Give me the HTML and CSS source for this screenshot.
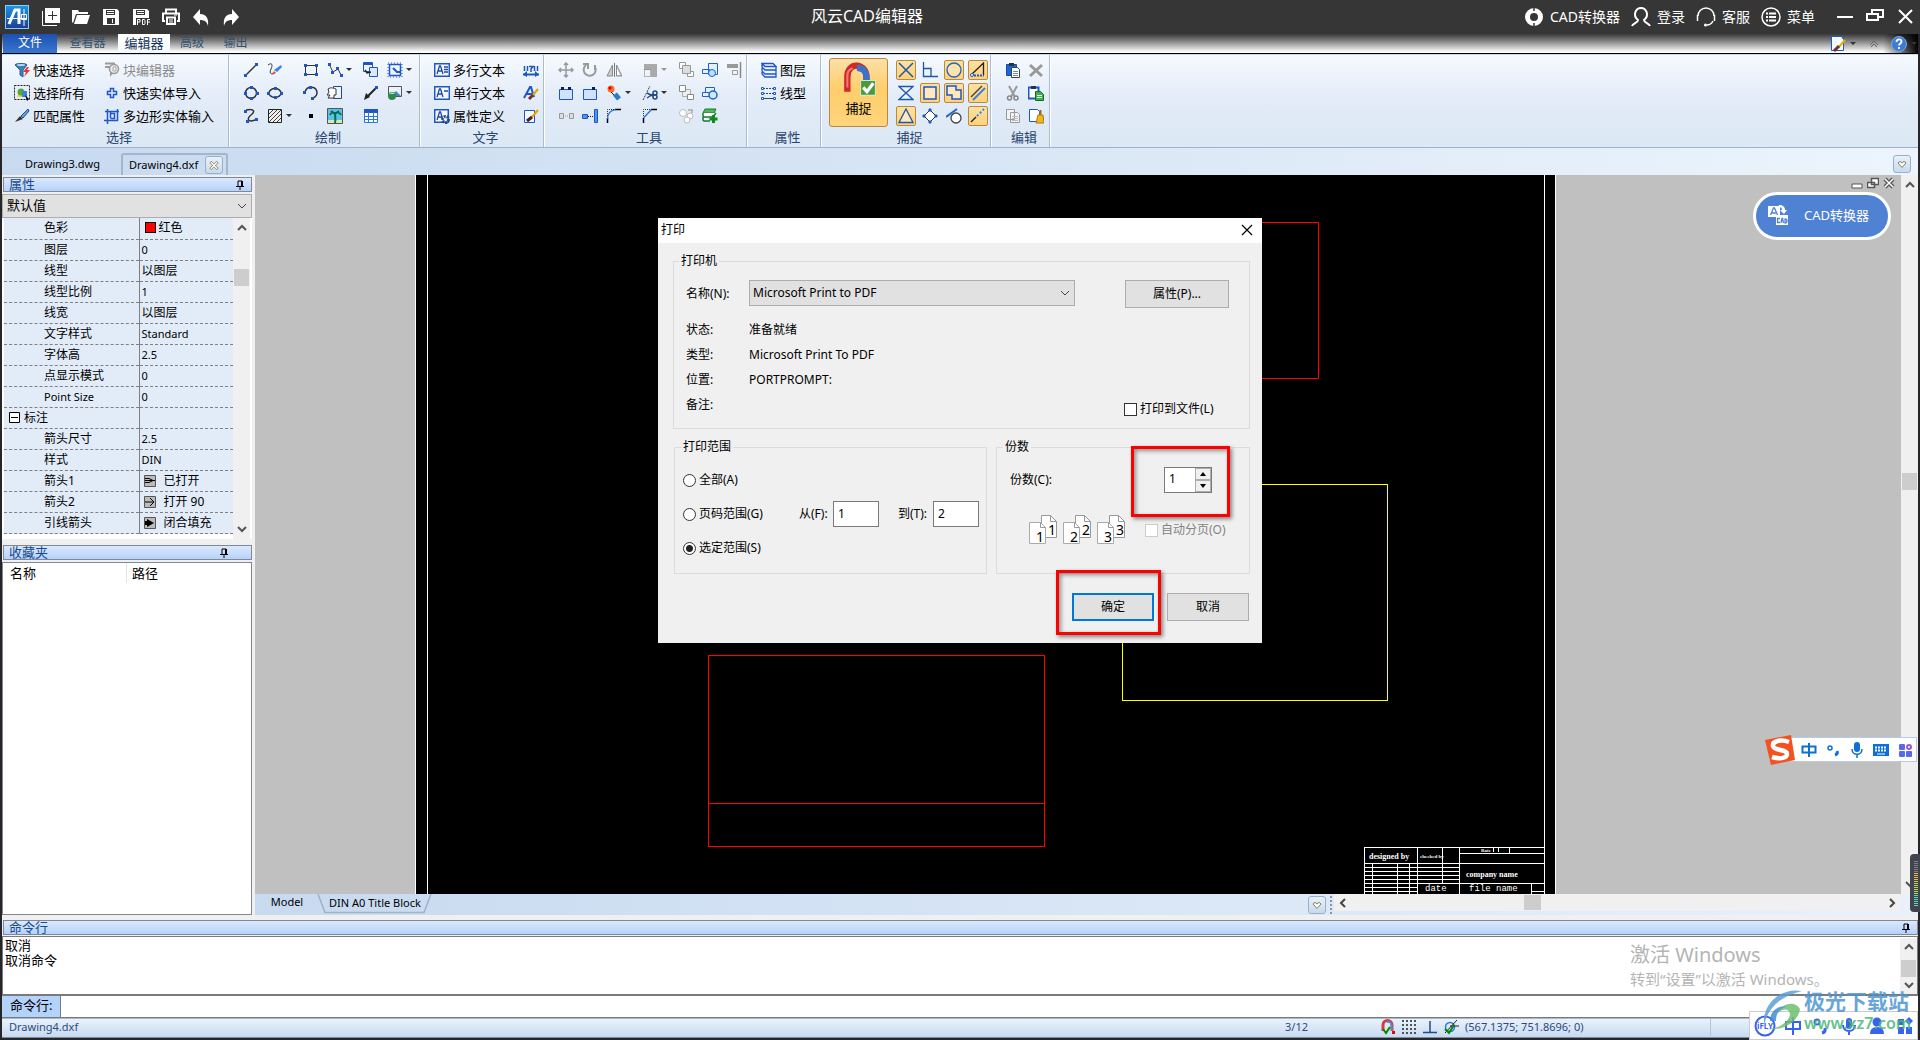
FILE: index.html
```html
<!DOCTYPE html>
<html lang="zh-CN">
<head>
<meta charset="utf-8">
<title>风云CAD编辑器</title>
<link rel="stylesheet" href="styles.css">
</head>
<body>
<svg class="defs" aria-hidden="true">
  <symbol id="up" viewBox="0 0 10 10"><path d="M1 7 5 3l4 4" fill="none" stroke="#555" stroke-width="2"/></symbol>
  <symbol id="down" viewBox="0 0 10 10"><path d="M1 3l4 4 4-4" fill="none" stroke="#555" stroke-width="2"/></symbol>
  <symbol id="left" viewBox="0 0 10 10"><path d="M7 1 3 5l4 4" fill="none" stroke="#444" stroke-width="2"/></symbol>
  <symbol id="right" viewBox="0 0 10 10"><path d="M3 1l4 4-4 4" fill="none" stroke="#444" stroke-width="2"/></symbol>
  <symbol id="pin" viewBox="0 0 8 10"><path d="M2 1v5M2 1h4M5.500 1v5M6.500 1v5M0 6.500h8M4 7v3" fill="none" stroke="#000" stroke-width="1"/></symbol>
  <symbol id="tri" viewBox="0 0 6 4"><path d="M0 0h6L3 3z" fill="currentColor"/></symbol>
  <symbol id="heart" viewBox="0 0 10 8"><path d="M1 2.500 3 .8l2 1.700L7 .8l2 1.700L5 7z" fill="#fff" stroke="#8a7c50"/></symbol>
  <symbol id="pages" viewBox="0 0 30 30"><path d="M12.500.5h9l6 6v16h-15z" fill="#fff" stroke="#999"/><path d="M21.500.5v6h6" fill="none" stroke="#999"/><path d="M.5 7.500h11l5 5v16h-16z" fill="#fff" stroke="#aaa"/><path d="M11.500 7.500v5h5" fill="none" stroke="#999"/></symbol>
</svg>

<header class="titlebar">
  <div class="quick">
    <svg class="logo" viewBox="0 0 24 24"><defs><linearGradient id="lg" x1="0" y1="0" x2="0" y2="1"><stop offset="0" stop-color="#1d96e4"/><stop offset="1" stop-color="#1d3c94"/></linearGradient></defs><rect x=".5" y=".5" width="23" height="23" fill="url(#lg)" stroke="#7fd0ff"/><path d="M4 19 10 5h4v14" fill="none" stroke="#fff" stroke-width="3"/><path d="M2 13.500h20M19 4v17" fill="none" stroke="#fff"/><path d="M16.500 9.500h5v5h-5z" fill="none" stroke="#fff"/></svg>
    <button aria-label="新建"><svg viewBox="0 0 18 18"><path d="M3 0h15v15H3z" fill="#fff"/><path d="M.5 3v14.500H15" fill="none" stroke="#fff"/><path d="M10.500 3v9M6 7.500h9" stroke="#333"/></svg></button>
    <button aria-label="打开"><svg viewBox="0 0 18 18"><path d="M0 14V2h6l1 2h9v2H4L1 15zM5 7h13l-3 9H2z" fill="#fff"/></svg></button>
    <button aria-label="保存"><svg viewBox="0 0 18 18"><path d="M1 1h14l2 2v14H1z" fill="#fff"/><path d="M4 2h9v5H4zM5 10h8v6H5z" fill="#363636"/><path d="M5 3.500h7M5 5.500h7M10.500 11v4" stroke="#fff"/></svg></button>
    <button aria-label="保存为PDF"><svg viewBox="0 0 18 18"><path d="M1 1h14l2 2v14H1z" fill="#fff"/><path d="M4 2h9v5H4zM4 10h14v7H4z" fill="#363636"/><path d="M5 3.500h7M5 5.500h7" stroke="#fff"/><path d="M5.500 17v-5.500h2.500v2.500H5.500M10.500 11.500h2l.5 1v3l-.5 1h-2zM15.500 17v-5.500H18M15.500 14H18" fill="none" stroke="#fff"/></svg></button>
    <button aria-label="打印"><svg viewBox="0 0 18 18"><path d="M4 5V1.500h10V5M3 13H1V5.500h16V13h-2" fill="none" stroke="#fff" stroke-width="2"/><path d="M5 9.500h8v6.500H5z" fill="none" stroke="#fff" stroke-width="2"/><path d="M7 12h4M7 14h4M12 7h3" stroke="#fff"/></svg></button>
    <button aria-label="撤销"><svg viewBox="0 0 18 18"><path d="M8 1v5c6 0 9 4 8 12-1-4-3-6-8-6v5L1 9z" fill="#fff"/></svg></button>
    <button aria-label="重做"><svg viewBox="0 0 18 18"><path d="M10 1v5C4 6 1 10 2 18c1-4 3-6 8-6v5l7-8z" fill="#fff"/></svg></button>
  </div>
  <h1>风云CAD编辑器</h1>
  <div class="title-end">
  <nav class="account">
    <button><svg viewBox="0 0 20 20"><circle cx="10" cy="10" r="6.500" fill="none" stroke="#fff" stroke-width="5"/><path d="M10 0v4M10 16v4" stroke="#363636" stroke-width="1.500"/></svg>CAD转换器</button>
    <button><svg viewBox="0 0 20 20"><path d="M1 19c1-3 6-3 6-6-6-5-2-12 3-12s9 7 3 12c0 3 5 3 6 6" fill="none" stroke="#fff" stroke-width="2"/></svg>登录</button>
    <button><svg viewBox="0 0 20 20"><path d="M2 9a8 8 0 0 1 16 0M1.500 8v6M18.500 8v6M17 14q-2 4-6 4" fill="none" stroke="#fff" stroke-width="1.500"/><circle cx="9.500" cy="18" r="1.500" fill="#fff"/></svg>客服</button>
    <button><svg viewBox="0 0 20 20"><circle cx="10" cy="10" r="9" fill="none" stroke="#fff" stroke-width="1.500"/><path d="M5 6.500h2m1 0h7M5 10h2m1 0h7M5 13.500h2m1 0h7" stroke="#fff" stroke-width="2"/></svg>菜单</button>
  </nav>
  <div class="winbtns">
    <button aria-label="最小化"><svg viewBox="0 0 18 18"><path d="M1 9h16" stroke="#fff" stroke-width="2"/></svg></button>
    <button aria-label="还原"><svg viewBox="0 0 18 18"><path d="M6 6V2h11v7h-5M1 6h11v6H1z" fill="none" stroke="#fff" stroke-width="2"/></svg></button>
    <button aria-label="关闭"><svg viewBox="0 0 18 18"><path d="M3 2l13 13M16 2 3 15" stroke="#fff" stroke-width="2"/></svg></button>
  </div>
  </div>
</header>

<div class="app">
<nav class="tabs">
  <button class="file">文件</button><button>查看器</button><button class="on">编辑器</button><button>高级</button><button>输出</button>
  <div class="tabs-end">
    <svg class="i" viewBox="0 0 16 16"><path d="M1.500.5h10l2 3v11h-12z" fill="#f4f9ff" stroke="#1e56c8"/><path d="M15 4 8 12" stroke="#e8b200" stroke-width="2"/><path d="M9 10 4 15" stroke="#703030" stroke-width="3"/></svg>
    <svg class="tr" viewBox="0 0 6 4"><use href="#tri"/></svg>
    <svg class="chev" viewBox="0 0 10 8"><path d="M1 5l4-4 4 4M2 7l3-3 3 3" fill="none" stroke="#666"/></svg>
    <svg class="i" viewBox="0 0 16 16"><circle cx="8" cy="8" r="7.500" fill="#3f7bd0" stroke="#7aa8e8"/><path d="M5.500 6c0-3.500 5-3.500 5-.5 0 2-2.500 2-2.500 4M8 11v2" fill="none" stroke="#fff" stroke-width="1.800"/></svg>
    <svg class="tr" viewBox="0 0 6 4"><use href="#tri"/></svg>
  </div>
</nav>

<section class="ribbon">
  <div class="group g-select">
    <div class="cols">
      <button><svg class="i" viewBox="0 0 16 16"><path d="M1 3c0-2 12-2 12 0L9 8v7l-3-2V8z" fill="#3a84b8" stroke="#2a5f96"/><ellipse cx="7" cy="3" rx="4" ry="1" fill="#b9def2"/><path d="m13 5-4 5h3l-2 5 6-7h-3l2-3z" fill="#f03028"/></svg>快速选择</button>
      <button class="off"><svg class="i" viewBox="0 0 16 16"><path d="M1 1.500h10M1 5h6" fill="none" stroke="#999" stroke-width="2"/><path d="M6 3v12l3-4" fill="#999"/><circle cx="10" cy="7" r="4.500" fill="#eee" stroke="#999" stroke-width="1.500"/><path d="M9 5h3v4H9z" fill="none" stroke="#aaa"/></svg>块编辑器</button>
      <button><svg class="i" viewBox="0 0 16 16"><path d="M.5.5h15v14H.5z" fill="none" stroke="#222" stroke-dasharray="2 1"/><path d="M3 12 6 4l4 8z" fill="#e9d234"/><circle cx="7" cy="7" r="3.500" fill="#57a83a"/><path d="M8 6h5v6H8z" fill="#3a84d8"/><path d="m11 10 4 4-2 2z" fill="#000"/></svg>选择所有</button>
      <button><svg class="i" viewBox="0 0 16 16"><path d="M6.500 3.500h3v3h3v3h-3v3h-3v-3h-3v-3h3z" fill="#e6f0ff" stroke="#1e56c8" stroke-width="1.500"/></svg>快速实体导入</button>
      <button><svg class="i" viewBox="0 0 16 16"><path d="m14 1 1 2-6 7-2-2z" fill="#5fa5e4" stroke="#234a86"/><path d="m1 14 5-6 3 3z" fill="#333"/></svg>匹配属性</button>
      <button><svg class="i" viewBox="0 0 16 16"><path d="M3.500 1v15M6.500 4v6M13.500 1v12M1 3.500h14M0 12.500h14M6.500 5.500h4v5h-4" fill="none" stroke="#1e56c8" stroke-width="1.500"/></svg>多边形实体输入</button>
    </div>
    <h2>选择</h2>
  </div>

  <div class="group g-draw">
    <div class="cols">
      <button aria-label="直线"><svg class="i" viewBox="0 0 16 16"><path d="M3 13 13 3" stroke="#333" stroke-width="1.500"/><path d="M1 12h3v3H1zM12 1h3v3h-3z" fill="#1e56c8"/></svg></button>
      <button aria-label="草图"><svg class="i" viewBox="0 0 16 16"><path d="M1 3c4-3 5 0 3 4s0 6 2 4" fill="none" stroke="#333"/><path d="m14 3 1 2-5 5-3-2z" fill="#3a84e8"/><path d="m7 9 2 2-4 2z" fill="#f33"/></svg></button>
      <button aria-label="矩形"><svg class="i" viewBox="0 0 16 16"><path d="M2.500 3.500h11v9h-11z" fill="none" stroke="#333"/><path d="M1 2h3v3H1zM12 2h3v3h-3zM1 11h3v3H1zM12 11h3v3h-3z" fill="#1e56c8"/></svg></button>
      <button aria-label="多段线"><svg class="i" viewBox="0 0 16 16"><path d="m2 2 4 8 5-3 3 6" fill="none" stroke="#333"/><path d="M1 1h3v3H1zM4 9h3v3H4zM9 5h3v3H9zM13 12h3v3h-3z" fill="#1e56c8"/></svg><svg class="tr" viewBox="0 0 6 4"><use href="#tri"/></svg></button>
      <button aria-label="插入块"><svg class="i" viewBox="0 0 16 16"><path d="M.5.5h9v9h-9z" fill="#eef4ff" stroke="#1e56c8"/><path d="M1 2h9" stroke="#1e56c8" stroke-width="2"/><path d="M6.500 5.500h8v9h-8z" fill="#dbe8ff" stroke="#1e56c8"/><path d="m2 8 2 3 4-1" fill="none" stroke="#222" stroke-width="1.500"/></svg></button>
      <button aria-label="块"><svg class="i" viewBox="0 0 16 16"><path d="M2.500 2.500h11v11h-11z" fill="none" stroke="#1e56c8" stroke-width="1.500"/><path d="M1 1h14v14H1z" fill="none" stroke="#1e56c8" stroke-dasharray="1 2"/><path d="m6 6 4 4h4" stroke="#1e56c8" fill="none" stroke-width="2"/></svg><svg class="tr" viewBox="0 0 6 4"><use href="#tri"/></svg></button>
      <button aria-label="圆"><svg class="i" viewBox="0 0 16 16"><circle cx="8" cy="8" r="5.500" fill="none" stroke="#333" stroke-width="1.500"/><path d="M7 1h3v3H7zM7 12h3v3H7zM1 7h3v3H1zM13 7h3v3h-3z" fill="#1e56c8"/></svg></button>
      <button aria-label="椭圆"><svg class="i" viewBox="0 0 16 16"><ellipse cx="8" cy="8" rx="6" ry="4.500" fill="none" stroke="#333" stroke-width="1.500"/><path d="M7 2h3v3H7zM7 11h3v3H7zM0 7h3v3H0zM13 7h3v3h-3z" fill="#1e56c8"/></svg></button>
      <button aria-label="圆弧"><svg class="i" viewBox="0 0 16 16"><path d="M2 7c2-7 12-6 12 1 0 3-3 5-5 5" fill="none" stroke="#333" stroke-width="1.500"/><path d="M0 6h3v3H0zM6 1h3v3H6zM8 12h3v3H8z" fill="#1e56c8"/></svg></button>
      <button aria-label="复制块"><svg class="i" viewBox="0 0 16 16"><path d="M6.500 1.500h8v12h-8z" fill="#eef4ff" stroke="#234a86"/><path d="M1 4c3-2 4-1 8 0v6H7v3H1l2-3H0l2-3z" fill="#fff" stroke="#333"/></svg></button>
      <button aria-label="引线"><svg class="i" viewBox="0 0 16 16"><path d="M4 12 14 2" stroke="#222" stroke-width="2"/><path d="m1 15 2-7 4 4z" fill="#222"/><path d="M12 1h3v3h-3z" fill="#1e56c8"/></svg></button>
      <button aria-label="图像"><svg class="i" viewBox="0 0 16 16"><path d="M1.500 1.500h13v10h-13z" fill="#eaf2ff" stroke="#555"/><path d="m4 11 5-5 5 5z" fill="#4a82c8"/><circle cx="5" cy="11" r="4" fill="#2d8a4a"/><path d="M2 9q3-3 6 0z" fill="#bfe8c8"/></svg><svg class="tr" viewBox="0 0 6 4"><use href="#tri"/></svg></button>
      <button aria-label="样条"><svg class="i" viewBox="0 0 16 16"><path d="M3 2c9-2 9 2 5 5s-4 8 4 5" fill="none" stroke="#333" stroke-width="1.500"/><path d="M1 2h3v3H1zM3 12h3v3H3zM12 10h3v3h-3z" fill="#1e56c8"/></svg></button>
      <button aria-label="填充"><svg class="i" viewBox="0 0 16 16"><path d="M1.500 1.500h13v13h-13z" fill="#eee" stroke="#222"/><path d="m2 6 4-4M2 10l8-8M2 14 14 2M6 14l8-8M10 14l4-4" stroke="#444"/></svg><svg class="tr" viewBox="0 0 6 4"><use href="#tri"/></svg></button>
      <button aria-label="点"><svg class="i" viewBox="0 0 16 16"><path d="M6 6h4v4H6z"/></svg></button>
      <button aria-label="图片"><svg class="i" viewBox="0 0 16 16"><path d="M.5.5h15v15H.5z" fill="#58c2ea" stroke="#555"/><path d="M1 12h14v3H1z" fill="#d8e8b0"/><path d="M8 15c1-4 0-7 0-9M3 7c1-3 4-3 5-1 1-2 5-2 6 1M4 3l4 3 4-3" fill="none" stroke="#0b6a4a" stroke-width="2"/></svg></button>
      <button aria-label="表格"><svg class="i" viewBox="0 0 16 16"><path d="M1.500 1.500h13v13h-13z" fill="#fff" stroke="#2a78e0"/><path d="M1 3h14" stroke="#1e56c8" stroke-width="4"/><path d="M1 8.500h14M1 11.500h14M5.500 4v11M10.500 4v11" stroke="#2a78e0"/></svg></button>
    </div>
    <h2>绘制</h2>
  </div>

  <div class="group g-text">
    <div class="cols">
      <button><svg class="i" viewBox="0 0 16 16"><path d="M.7 1.700h14.600v12.600H.7z" fill="#f4f8ff" stroke="#1e56c8" stroke-width="1.500"/><path d="m3 12 2.500-8h1L9 12M4 9h4M10 5h4M10 7.500h4M10 10h4" fill="none" stroke="#234a9a" stroke-width="1.300"/></svg>多行文本</button>
      <button aria-label="查找"><svg class="i" viewBox="0 0 16 16"><path d="M0 12.500h16" stroke="#1e56c8" stroke-width="2"/><path d="M4 9v6l-4-2.500zM12 9v6l4-2.500z" fill="#1e56c8"/><path d="M1.500 4v5M14.500 4v5M4.500 4v5M11.500 4v5M6 4.500h4L8 7v3" fill="none" stroke="#1e56a8" stroke-width="1.500"/></svg></button>
      <button><svg class="i" viewBox="0 0 16 16"><path d="M.7 1.700h14.600v12.600H.7z" fill="#f4f8ff" stroke="#1e56c8" stroke-width="1.500"/><path d="m3 12 2.500-8h1L9 12M4 9h4M10 6h4" fill="none" stroke="#234a9a" stroke-width="1.300"/></svg>单行文本</button>
      <button aria-label="文字样式"><svg class="i" viewBox="0 0 16 16"><path d="m1 13 6-11h1l3 10M3 9h6" fill="none" stroke="#1e56c8" stroke-width="2"/><path d="m15 4-6 7" stroke="#e8a200" stroke-width="2"/><path d="m10 10-4 4" stroke="#703030" stroke-width="3"/></svg></button>
      <button><svg class="i" viewBox="0 0 16 16"><path d="M.7 1.700h13.600v12.600H.7z" fill="#f4f8ff" stroke="#1e56c8" stroke-width="1.500"/><path d="m3 12 2.500-8h1L9 12M4 9h4" fill="none" stroke="#234a9a" stroke-width="1.300"/><circle cx="11.500" cy="11.500" r="3" fill="none" stroke="#234a86" stroke-width="3" stroke-dasharray="2 1"/></svg>属性定义</button>
      <button aria-label="编辑文字"><svg class="i" viewBox="0 0 16 16"><path d="M1.500 2.500h10v12h-10z" fill="#f4f9ff" stroke="#1e56c8"/><path d="m15 2-6 7" stroke="#e8a200" stroke-width="2"/><path d="m9 9-5 4" stroke="#402020" stroke-width="3"/></svg></button>
    </div>
    <h2>文字</h2>
  </div>

  <div class="group g-tools">
    <div class="cols">
      <button aria-label="移动"><svg class="i" viewBox="0 0 16 16"><path d="M8 2v12M2 8h12M6 3l2-2 2 2M6 13l2 2 2-2M3 6 1 8l2 2M13 6l2 2-2 2" fill="none" stroke="#999" stroke-width="1.500"/></svg></button>
      <button aria-label="旋转"><svg class="i" viewBox="0 0 16 16"><path d="M4 3a6 6 0 1 0 9 2M1 2h5v5M13 8V3" fill="none" stroke="#999" stroke-width="2"/></svg></button>
      <button aria-label="镜像"><svg class="i" viewBox="0 0 16 16"><path d="M6.500 3v11H1zM10.500 3v11H16z" fill="#ccc" stroke="#888"/><path d="M8.500 1v14" stroke="#777"/><path d="M11 6v7h3z" fill="#fff"/></svg></button>
      <button aria-label="缩放" class="dim"><svg class="i" viewBox="0 0 16 16"><path d="M2 2h13v13H9V8H2z" fill="#aaa"/><path d="M2.500 7.500h6v7h-6z" fill="none" stroke="#777" stroke-dasharray="1 1"/></svg><svg class="tr" viewBox="0 0 6 4"><use href="#tri"/></svg></button>
      <button aria-label="前置"><svg class="i" viewBox="0 0 16 16"><path d="M1.500.5h6v6h-6zM9.500 9.500h6v5h-6z" fill="#fff" stroke="#999"/><path d="M4.500 3.500h8v8h-8z" fill="#ddd" stroke="#999"/></svg></button>
      <button aria-label="组合"><svg class="i" viewBox="0 0 16 16"><path d="M6.500 1.500h9v11h-9zM.5 7.500h7v4h-7z" fill="#e4f0ff" stroke="#1e62c8"/><circle cx="10" cy="11" r="3.500" fill="#bfe0ff" stroke="#1e62c8"/></svg></button>
      <button aria-label="对齐"><svg class="i" viewBox="0 0 16 16"><path d="M1 2h11v4H1z" fill="#999"/><path d="M6.500 8.500h5v4h-5z" fill="none" stroke="#999"/><path d="M14.500 0v16" stroke="#888" stroke-width="1.500"/></svg></button>

      <button aria-label="打断"><svg class="i" viewBox="0 0 16 16"><path d="M1.500 4.500h13v10h-13z" fill="#cfe2ff" stroke="#1e56c8"/><path d="M3 2h3v3H3zM10 2h3v3h-3z" fill="#111c50"/></svg></button>
      <button aria-label="合并"><svg class="i" viewBox="0 0 16 16"><path d="M1.500 4.500h13v10h-13z" fill="#cfe2ff" stroke="#1e56c8"/><path d="M10 2h3v3h-3z" fill="#111c50"/></svg></button>
      <button aria-label="分解"><svg class="i" viewBox="0 0 16 16"><circle cx="5" cy="4" r="3.500" fill="#ff6a20"/><circle cx="4" cy="3" r="1.500" fill="#c00"/><path d="m5 7 4 4" stroke="#222"/><path d="m9 9 4 5" stroke="#2a7cc8" stroke-width="5"/></svg><svg class="tr" viewBox="0 0 6 4"><use href="#tri"/></svg></button>
      <button aria-label="修剪"><svg class="i" viewBox="0 0 16 16"><path d="M1 15 8 1" stroke="#333" stroke-dasharray="2 1"/><path d="m5 8 6 3M5 13l6-4" stroke="#234a86" stroke-width="1.500"/><circle cx="13" cy="8" r="2" fill="none" stroke="#234a86" stroke-width="1.500"/><circle cx="13" cy="12" r="2" fill="none" stroke="#234a86" stroke-width="1.500"/></svg><svg class="tr" viewBox="0 0 6 4"><use href="#tri"/></svg></button>
      <button aria-label="后置"><svg class="i" viewBox="0 0 16 16"><path d="M4.500 4.500h8v7h-8z" fill="#eee" stroke="#aaa"/><path d="M1.500.5h6v6h-6zM9.500 9.500h6v5h-6z" fill="#fff" stroke="#888"/></svg></button>
      <button aria-label="取消组合"><svg class="i" viewBox="0 0 16 16"><path d="M3.500 2.500h9v5h-9zM.5 7.500h7v4h-7z" fill="#e4f0ff" stroke="#1e62c8"/><circle cx="11" cy="10" r="4" fill="#cfe8ff" stroke="#1e62c8" stroke-width="1.500"/></svg></button>
      <span></span>

      <button aria-label="拉伸"><svg class="i" viewBox="0 0 16 16"><path d="M1.500 5.500h4v5h-4zM11.500 5.500h4v5h-4z" fill="#ddd" stroke="#999"/><path d="M7 8h4" stroke="#999" stroke-dasharray="1 1"/></svg></button>
      <button aria-label="延伸"><svg class="i" viewBox="0 0 16 16"><path d="M.5 6.500h5v4h-5zM12.500 1.500h3v13h-3z" fill="#4a98f0" stroke="#1e56c8"/><path d="M6 8.500h6" stroke="#111" stroke-dasharray="1 1"/></svg></button>
      <button aria-label="圆角"><svg class="i" viewBox="0 0 16 16"><path d="M1.500 15V10M9 1.500h6" stroke="#000" stroke-width="1.500"/><path d="M1.500 11c0-6 4-9 8-9.500" fill="none" stroke="#2a78e0" stroke-width="1.500"/><path d="M1.500 8V1.500H9" fill="none" stroke="#333" stroke-dasharray="1 1"/></svg></button>
      <button aria-label="倒角"><svg class="i" viewBox="0 0 16 16"><path d="M1.500 15V10M9 1.500h6" stroke="#000" stroke-width="1.500"/><path d="m1.500 10 8-8.500" fill="none" stroke="#2a78e0" stroke-width="1.500"/><path d="M1.500 8V1.500H9" fill="none" stroke="#333" stroke-dasharray="1 1"/></svg></button>
      <button aria-label="次序"><svg class="i" viewBox="0 0 16 16"><circle cx="5" cy="5" r="3.500" fill="#fff" stroke="#bbb"/><circle cx="12" cy="8" r="3" fill="#fff" stroke="#bbb"/><circle cx="9" cy="12" r="3" fill="#fff" stroke="#bbb"/><path d="M10 2h4v3" fill="none" stroke="#aaa" stroke-width="1.500"/></svg></button>
      <button aria-label="添加图层"><svg class="i" viewBox="0 0 16 16"><path d="M3 1h11l-2 4H1z" fill="#4cb858" stroke="#167a2c"/><path d="M1 5v3l1 1h9l3-4M1 9v3l1 1h6" fill="#fff" stroke="#167a2c" stroke-width="1.500"/><path d="M11.500 7v8M7.500 11h8" stroke="#0c8a1c" stroke-width="3"/></svg></button>
      <span></span>
    </div>
    <h2>工具</h2>
  </div>

  <div class="group g-prop">
    <div class="cols">
      <button><svg class="i" viewBox="0 0 16 16"><path d="m1 1.500h11l3 3H4zM1 2v3l3 3h11M1 6v3l3 3h11M1 10v2l3 3h11V4" fill="#eef5ff" stroke="#1e56c8" stroke-width="1.300"/></svg>图层</button>
      <button><svg class="i" viewBox="0 0 16 16"><path d="M2 3.500h12M2 8.500h12" stroke="#234a86" stroke-dasharray="2 1"/><path d="M2 13.500h12" stroke="#234a86"/><path d="M.5 2.500h2v2h-2zM12.500 2.500h2v2h-2zM.5 7.500h2v2h-2zM12.500 7.500h2v2h-2zM.5 12.500h2v2h-2zM12.500 12.500h2v2h-2z" fill="#fff" stroke="#1e56c8"/></svg>线型</button>
    </div>
    <h2>属性</h2>
  </div>

  <div class="group g-snap">
    <div class="snap-row">
    <button class="big"><svg viewBox="0 0 32 34"><path d="M5 28V14c0-15 18-13 18 0v4" fill="none" stroke="#d02828" stroke-width="6"/><path d="M14 5.500c7 0 9 5 9 9V19" fill="none" stroke="#3a72c8" stroke-width="6"/><path d="M5 24V13c0-4 2-6 5-7" fill="none" stroke="#f07878" stroke-width="2"/><path d="M17.500 17.500h14v14h-14z" fill="#4c9a3c" stroke="#d8e8c0"/><path d="m20 24 3.500 4 6-8" fill="none" stroke="#fff" stroke-width="3"/></svg>捕捉</button>
    <div class="cols">
      <button class="sel" aria-label="交点"><svg class="i" viewBox="0 0 16 16"><path d="m1 1 14 14M15 1 1 15" stroke="#1e56a8" stroke-width="1.500"/></svg></button>
      <button aria-label="垂足"><svg class="i" viewBox="0 0 16 16"><path d="M1.500 0v14.500H16M2 6.500h7V14" fill="none" stroke="#1e56a8" stroke-width="1.300"/></svg></button>
      <button class="sel" aria-label="圆心"><svg class="i" viewBox="0 0 16 16"><circle cx="8" cy="8" r="7" fill="#fbe3b0" stroke="#1e66b8" stroke-width="1.300"/></svg></button>
      <button class="sel" aria-label="端点"><svg class="i" viewBox="0 0 16 16"><path d="M2 12 13.500 1V13" fill="none" stroke="#222" stroke-width="1.300"/><path d="M4 13.500h10" stroke="#1e56c8" stroke-width="2" stroke-dasharray="2 1"/><circle cx="2" cy="13" r="1.500" fill="#fff" stroke="#1e56c8"/></svg></button>
      <button aria-label="最近点"><svg class="i" viewBox="0 0 16 16"><path d="M1 1.500h14L1 14.500h14z" fill="#eef5ff" stroke="#1e56a8" stroke-width="1.300"/></svg></button>
      <button class="sel" aria-label="插入点"><svg class="i" viewBox="0 0 16 16"><path d="M2 2h12v12H2z" fill="#fde9bd" stroke="#1e56c8" stroke-width="1.500"/></svg></button>
      <button class="sel" aria-label="外观"><svg class="i" viewBox="0 0 16 16"><path d="M1 1h9v4h5v9H6v-4H1z" fill="#fde9bd" stroke="#1e56c8" stroke-width="1.500"/></svg></button>
      <button class="sel" aria-label="平行"><svg class="i" viewBox="0 0 16 16"><path d="M1 12 12 1" stroke="#444" stroke-width="1.500"/><path d="M3 15 15 3" stroke="#3a84d8" stroke-width="2"/></svg></button>
      <button class="sel" aria-label="中点"><svg class="i" viewBox="0 0 16 16"><path d="M8 1 15 14.500H1z" fill="#fde9bd" stroke="#1e56a8" stroke-width="1.300"/></svg></button>
      <button aria-label="象限点"><svg class="i" viewBox="0 0 16 16"><path d="m8 2 6 6-6 6-6-6z" fill="#fff" stroke="#333"/><path d="m8 0 2 2-2 2-2-2zM8 12l2 2-2 2-2-2zM0 8l2-2 2 2-2 2zM12 8l2-2 2 2-2 2z" fill="#1e56c8"/></svg></button>
      <button aria-label="切点"><svg class="i" viewBox="0 0 16 16"><circle cx="10" cy="10" r="5" fill="#fff" stroke="#444" stroke-width="1.300"/><path d="M0 9 11 1" stroke="#1e66c8" stroke-width="2"/></svg></button>
      <button class="sel" aria-label="延长"><svg class="i" viewBox="0 0 16 16"><path d="m1 14 5-5" stroke="#222" stroke-width="1.500"/><path d="m7 8 7-7" stroke="#3a84d8" stroke-width="2" stroke-dasharray="2 2"/></svg></button>
    </div>
    </div>
    <h2>捕捉</h2>
  </div>

  <div class="group g-edit">
    <div class="cols">
      <button aria-label="粘贴"><svg class="i" viewBox="0 0 16 16"><path d="M1.500 2.500h10v11h-10z" fill="#1e66d8" stroke="#184a9a"/><path d="M4 1h5v3H4z" fill="#234"/><path d="M6.500 5.500h6l2 2v8h-8z" fill="#fff" stroke="#345"/><path d="M8 9.500h5M8 11.500h5M8 13.500h5" stroke="#789"/></svg></button>
      <button aria-label="删除"><svg class="i" viewBox="0 0 16 16"><path d="m2 3 12 11M14 3 2 14" stroke="#999" stroke-width="3"/></svg></button>
      <button aria-label="剪切"><svg class="i" viewBox="0 0 16 16"><path d="m4 1 6 11M12 1 6 12" stroke="#999" stroke-width="2"/><circle cx="4.500" cy="13" r="2" fill="none" stroke="#888" stroke-width="1.500"/><circle cx="11" cy="13" r="2" fill="none" stroke="#888" stroke-width="1.500"/></svg></button>
      <button aria-label="选择性粘贴"><svg class="i" viewBox="0 0 16 16"><path d="M.5 2.500h10v11h-10z" fill="#fff" stroke="#1e56c8" stroke-width="2"/><path d="M3 1h5v3H3z" fill="#234"/><path d="M7.500 6.500h5l3 3v6h-8z" fill="#3fae4c" stroke="#107020"/><path d="M9 10.500h5M9 12.500h5" stroke="#fff"/></svg></button>
      <button aria-label="复制"><svg class="i" viewBox="0 0 16 16"><path d="M1.500 1.500h8v10h-8zM5.500 4.500h7l2 2v8h-9z" fill="#f4f4f4" stroke="#999"/><path d="M7 8.500h6M7 10.500h6M7 12.500h6" stroke="#bbb"/></svg></button>
      <button aria-label="清理"><svg class="i" viewBox="0 0 16 16"><path d="M1.500 1.500h8l2 2v10h-10z" fill="#fff" stroke="#1e56c8"/><path d="M12.500 2v6" stroke="#9a7010" stroke-width="2"/><path d="M10 7h5l1 8H8z" fill="#f0b818" stroke="#b07810"/></svg></button>
    </div>
    <h2>编辑</h2>
  </div>
</section>

<div class="doctabs">
  <button>Drawing3.dwg</button>
  <div class="doc-on"><button>Drawing4.dxf</button><button class="sq" aria-label="关闭标签"><svg viewBox="0 0 10 10"><path d="m1 1 8 8M9 1 1 9" stroke="#8a7c50" stroke-width="3"/><path d="m1.500 1.500 7 7M8.500 1.500l-7 7" stroke="#fff" stroke-width="1.500"/></svg></button></div>
  <button class="sq last" aria-label="标签列表"><svg viewBox="0 0 10 8"><use href="#heart"/></svg></button>
</div>

<main>
  <aside>
    <h3 class="bar"><span>属性</span><svg class="pin" viewBox="0 0 8 10"><use href="#pin"/></svg></h3>
    <select class="preset" aria-label="对象"><option>默认值</option></select>
    <div class="props">
      <table>
        <tr><th>色彩</th><td><i class="red"></i>红色</td></tr>
        <tr><th>图层</th><td class="en">0</td></tr>
        <tr><th>线型</th><td>以图层</td></tr>
        <tr><th>线型比例</th><td class="en">1</td></tr>
        <tr><th>线宽</th><td>以图层</td></tr>
        <tr><th>文字样式</th><td class="en">Standard</td></tr>
        <tr><th>字体高</th><td class="en">2.5</td></tr>
        <tr><th>点显示模式</th><td class="en">0</td></tr>
        <tr><th class="en">Point Size</th><td class="en">0</td></tr>
        <tr><th class="sect"><svg viewBox="0 0 11 11"><path d="M.5.5h10v10H.5z" fill="#fff" stroke="#000"/><path d="M2 5.500h7" stroke="#000"/></svg>标注</th><td></td></tr>
        <tr><th>箭头尺寸</th><td class="en">2.5</td></tr>
        <tr><th>样式</th><td class="en">DIN</td></tr>
        <tr><th>箭头1</th><td><svg viewBox="0 0 12 12"><path d="M.5.500h11v11H.5z" fill="#bbb" stroke="#555"/><path d="M1 3.500h4l4 2-4 2H1M1 5.500h10" fill="none" stroke="#000"/></svg>已打开</td></tr>
        <tr><th>箭头2</th><td><svg viewBox="0 0 12 12"><path d="M.5.500h11v11H.5z" fill="#bbb" stroke="#555"/><path d="M1 6h9M6 2l4 4-4 4" fill="none" stroke="#000"/></svg>打开 90</td></tr>
        <tr><th>引线箭头</th><td><svg viewBox="0 0 12 12"><path d="M.5.500h11v11H.5z" fill="#bbb" stroke="#555"/><path d="M1 4h2V2l7 4-7 4V8H1z"/></svg>闭合填充</td></tr>
      </table>
      <div class="vs vs-props"><svg viewBox="0 0 10 10"><use href="#up"/></svg><b></b><svg viewBox="0 0 10 10"><use href="#down"/></svg></div>
    </div>
    <h3 class="bar fav"><span>收藏夹</span><svg class="pin" viewBox="0 0 8 10"><use href="#pin"/></svg></h3>
    <div class="favs"><div class="fav-head"><span>名称</span><span>路径</span></div></div>
  </aside>

  <section class="work">
    <div class="stage">
      <div class="canvas">
        <svg class="drawing" viewBox="0 0 1646 719" preserveAspectRatio="xMidYMin slice" shape-rendering="crispEdges">
          <rect x="160" y="0" width="1141" height="719" fill="#fff"/>
          <rect x="161" y="0" width="11" height="719"/><rect x="173" y="0" width="1116" height="719"/><rect x="1290" y="0" width="10" height="719"/>
          <g fill="none" stroke="#f00"><path d="M701.500 47.500h362v156h-362zM453.500 480.500h336v191h-336zM453.500 628.500h336M614 671.500h12"/></g>
          <path d="M867.500 309.500h265v216h-265z" fill="none" stroke="#ff0"/>
          <path d="M1109.500 719V672.500H1289M1109 688.500h180M1162.500 672v47M1187.500 672v36M1204.500 672v47M1204 678.500h85M1162 708.500h127M1109 692.500h95M1109 696.500h95M1109 700.500h95M1109 704.500h95M1109 708.500h54M1109 712.500h53M1109 716.500h53M1117.500 689v30M1142.500 689v30M1154.500 689v30M1276.500 709v10M1276 716.500h13M1238.500 673v4M1243.500 673v4M1254.500 673v5" fill="none" stroke="#fff"/>
          <g class="cad"><text x="1114" y="684" class="b">designed by</text><text x="1165" y="683" class="t">checked by</text><text x="1211" y="702" class="b">company name</text><text x="1170" y="716">date</text><text x="1214" y="716">file name</text><text x="1226" y="677" class="t">Rate</text></g>
        </svg>
        <div class="mdi">
          <svg viewBox="0 0 12 12"><path d="M1 7h10v4H1z" fill="#fff" stroke="#555"/></svg>
          <svg viewBox="0 0 12 12"><path d="M4.500 1.500h7v6h-7zM.5 5.500h7v5h-7z" fill="#fff" stroke="#555" stroke-width="1.500"/></svg>
          <svg viewBox="0 0 12 12"><path d="m2 2 8 8M10 2l-8 8" stroke="#555" stroke-width="4"/><path d="m2 2 8 8M10 2l-8 8" stroke="#fff" stroke-width="1.500"/></svg>
        </div>
        <button class="convert"><svg viewBox="0 0 20 20"><path d="M0 1h12v11H0zM8 10h12v10H8zM11 0c4 0 6 2 6 5h2l-3 4-4-4h2c0-2-1-3-3-3z" fill="#fff"/><path d="m2.500 10 3-7h1l3 7M4 8h4M12 13.500H9.500v4H12M13 18l1-4.500h.5l1 4.500M17 13.500v4.500q2 0 2-2t-2-2" fill="none" stroke="#4f82d2" stroke-width="1.300"/></svg>CAD转换器</button>

        <div class="dialog" role="dialog" aria-label="打印">
          <header><span>打印</span><button aria-label="关闭"><svg viewBox="0 0 12 12"><path d="m1 1 10 10M11 1 1 11" stroke="#000" stroke-width="1.200"/></svg></button></header>
          <form>
            <fieldset class="printer"><legend>打印机</legend>
              <label for="pn" class="top">名称(N):</label>
              <select id="pn" class="top"><option>Microsoft Print to PDF</option></select>
              <button type="button" class="btn top">属性(P)...</button>
              <span>状态:</span><span>准备就绪</span><i></i>
              <span>类型:</span><span>Microsoft Print To PDF</span><i></i>
              <span>位置:</span><span>PORTPROMPT:</span><i></i>
              <span>备注:</span><span></span><label class="tick"><input type="checkbox">打印到文件(L)</label>
            </fieldset>
            <div class="pair">
              <fieldset class="range"><legend>打印范围</legend>
                <div class="line"><label><input type="radio" name="r">全部(A)</label></div>
                <div class="line"><label class="wide"><input type="radio" name="r">页码范围(G)</label><label class="from" for="f">从(F):</label><input type="text" id="f" value="1"><label class="to" for="t">到(T):</label><input type="text" id="t" value="2"></div>
                <div class="line"><label><input type="radio" name="r" checked>选定范围(S)</label></div>
              </fieldset>
              <fieldset class="copies"><legend>份数</legend>
                <div class="line"><label for="c">份数(C):</label><div class="spin"><input type="text" id="c" value="1"><div><button type="button" aria-label="增加"><svg viewBox="0 0 6 4"><path d="M0 4h6L3 0z"/></svg></button><button type="button" aria-label="减少"><svg viewBox="0 0 6 4"><path d="M0 0h6L3 4z"/></svg></button></div></div></div>
                <div class="line collate">
                  <svg viewBox="0 0 30 30"><use href="#pages"/><text x="7" y="27">1</text><text x="19" y="20">1</text></svg>
                  <svg viewBox="0 0 30 30"><use href="#pages"/><text x="7" y="27">2</text><text x="19" y="20">2</text></svg>
                  <svg viewBox="0 0 30 30"><use href="#pages"/><text x="7" y="27">3</text><text x="19" y="20">3</text></svg>
                  <label class="tick"><input type="checkbox" disabled>自动分页(O)</label>
                </div>
              </fieldset>
            </div>
            <footer><button type="button" class="btn ok">确定</button><button type="button" class="btn">取消</button></footer>
          </form>
          <div class="mark m1"></div><div class="mark m2"></div>
        </div>
      </div>
      <div class="vs vs-main"><svg viewBox="0 0 10 10"><use href="#up"/></svg><b></b><svg viewBox="0 0 10 10"><use href="#down"/></svg></div>
    </div>
    <div class="layouts">
      <button>Model</button>
      <button class="lay"><svg viewBox="0 0 116 20" preserveAspectRatio="none"><path d="M1 0l7 18.500h99L114 0" fill="none" stroke="#9fb2c8" stroke-width="1.500"/></svg><span>DIN A0 Title Block</span></button>
      <button class="sq last" aria-label="布局列表"><svg viewBox="0 0 10 8"><use href="#heart"/></svg></button>
      <i class="grip"></i>
      <div class="hs"><svg viewBox="0 0 10 10"><use href="#left"/></svg><b></b><svg viewBox="0 0 10 10"><use href="#right"/></svg></div>
    </div>
    <div class="sogou">
      <svg class="s" viewBox="0 0 32 32"><path d="m1 6 26-5 4 25-24 5z" fill="#f4511e"/><path d="M25 8C17 5 8 7 9 12s14 3 14 8-9 5-15 3" fill="none" stroke="#fff" stroke-width="4.500"/></svg>
      <svg viewBox="0 0 16 16"><path d="M1.500 4.500h13v6h-13zM8 1v14" fill="none" stroke="#0d6fd8" stroke-width="2"/></svg>
      <svg viewBox="0 0 16 16"><circle cx="5" cy="6" r="2" fill="none" stroke="#0d6fd8" stroke-width="1.500"/><path d="M12 9q1 3-2 4" fill="none" stroke="#0d6fd8" stroke-width="3"/></svg>
      <svg viewBox="0 0 16 16"><rect x="5" y="0" width="6" height="10" rx="3" fill="#0d6fd8"/><path d="M3 7c0 7 10 7 10 0M8 12v4" fill="none" stroke="#0d6fd8" stroke-width="1.500"/></svg>
      <svg viewBox="0 0 16 16"><path d="M0 2h16v12H0z" fill="#0d6fd8"/><path d="M2 5.500h12M2 8.500h12" stroke="#fff" stroke-width="2" stroke-dasharray="2 1"/><path d="M4 12h8" stroke="#fff"/></svg>
      <svg viewBox="0 0 16 16"><rect x="2" y="2" width="6" height="6" rx="1" fill="#5a68e8"/><rect x="9" y="9" width="6" height="6" rx="1" fill="#5a68e8"/><rect x="2" y="9" width="6" height="6" rx="1" fill="#5a68e8"/><circle cx="12" cy="5" r="2" fill="none" stroke="#9a58d8" stroke-width="2"/></svg>
    </div>
    <svg class="meter" viewBox="0 0 10 58"><rect width="14" height="58" rx="4" fill="#40444e"/><path d="M6 7v12" stroke="#7a7e88" stroke-width="4" stroke-dasharray="1 1"/><path d="M6 19v10" stroke="#e8b848" stroke-width="4" stroke-dasharray="1 1"/><path d="M6 29v12" stroke="#b8d858" stroke-width="4" stroke-dasharray="1 1"/><path d="M6 41v11" stroke="#58d8b8" stroke-width="4" stroke-dasharray="1 1"/></svg>
  </section>
</main>

<section class="command">
  <h3 class="bar"><span>命令行</span><svg class="pin" viewBox="0 0 8 10"><use href="#pin"/></svg></h3>
  <div class="log"><div><p>取消</p><p>取消命令</p></div>
    <div class="activate"><strong>激活 Windows</strong><span>转到“设置”以激活 Windows。</span></div>
    <div class="vs vs-log"><svg viewBox="0 0 10 10"><use href="#up"/></svg><b></b><svg viewBox="0 0 10 10"><use href="#down"/></svg></div>
  </div>
  <div class="prompt"><label for="cmd">命令行:</label><input id="cmd" type="text"></div>
</section>

<footer class="status">
  <span class="file-name">Drawing4.dxf</span><span class="count">3/12</span>
  <div class="modes">
  <svg class="i" viewBox="0 0 16 16"><path d="M3 12V6c0-6 9-6 9 0v6" fill="none" stroke="#d04040" stroke-width="3"/><path d="M7 3c5-1 5 3 5 9" fill="none" stroke="#5a82c8" stroke-width="2"/><path d="m3 10 3 4 4-6" fill="none" stroke="#080" stroke-width="2"/><path d="M12 12h3v3h-3z" fill="#e00"/></svg>
  <svg class="i" viewBox="0 0 16 16"><path d="M1 2h15M1 6h15M1 10h15M1 14h15" stroke="#222" stroke-width="1.500" stroke-dasharray="2 2"/></svg>
  <svg class="i" viewBox="0 0 16 16"><path d="M8 2v11M1 13.500h14" stroke="#234a86" stroke-width="1.500"/></svg>
  <svg class="i" viewBox="0 0 16 16"><circle cx="7" cy="8" r="4.500" fill="none" stroke="#2a78e0" stroke-width="1.500"/><path d="M2 14 14 1M7 7h9" stroke="#222"/><path d="m2 10 4 4 5-8" fill="none" stroke="#080" stroke-width="2"/></svg>
  </div>
  <span class="pos">(567.1375; 751.8696; 0)</span><i class="sep"></i>
</footer>
<div class="ifly">
  <svg viewBox="0 0 22 22"><circle cx="11" cy="11" r="9.500" fill="#fff" stroke="#3a62f0" stroke-width="2"/><text x="3" y="14" class="fly">iFLY</text></svg>
  <svg viewBox="0 0 22 22"><path d="M4 7h14v7H4zM11 2v18" fill="none" stroke="#3a62f0" stroke-width="2"/></svg>
  <svg viewBox="0 0 22 22"><circle cx="7" cy="7" r="2.500" fill="none" stroke="#3a62f0" stroke-width="2"/><path d="M15 13q1 4-3 5" fill="none" stroke="#3a62f0" stroke-width="3"/></svg>
  <svg viewBox="0 0 22 22"><rect x="8" y="3" width="6" height="11" rx="3" fill="#3a62f0"/><path d="M5 10c0 8 12 8 12 0M11 16v4" fill="none" stroke="#3a62f0" stroke-width="2"/></svg>
  <svg viewBox="0 0 22 22"><circle cx="11" cy="7" r="4.500" fill="#3a62f0"/><path d="M4 19q0-7 7-7t7 7z" fill="#3a62f0"/></svg>
  <svg viewBox="0 0 22 22"><path d="M4 4h6v6H4zM4 12h6v7H4zM12 12h6v7h-6zM15 2l4 4-4 4-4-4z" fill="#3a62f0"/></svg>
</div>
<div class="site">
  <svg viewBox="0 0 44 44"><path d="M42 2C22-2 2 14 4 36c4-16 14-28 38-34z" fill="#5e9fd8"/><path d="M6 40c16 2 32-6 34-20-6-10-20-4-22 4 6-6 12-4 12 2-2 8-12 14-24 14z" fill="#6cc070"/><path d="M10 32c0-10 8-16 16-14-8 2-10 8-10 14z" fill="#3f8fd0"/></svg>
  <div><strong>极光下载站</strong><span>www.xz7.com</span></div>
</div>
</div>
</body>
</html>
```
FILE: styles.css
```css
* { box-sizing: border-box; }
body {
  margin: 0; height: 100vh; min-height: 720px; display: flex; flex-direction: column; overflow: hidden;
  background: #26262a; color: #000; font: 12px/16px "Noto Sans", "Noto Sans CJK SC", sans-serif;
}
h1, h2, h3, p { margin: 0; font-weight: 400; font-size: 12px; }
button, input, select { font: inherit; color: inherit; margin: 0; padding: 0; border: 0; background: none; border-radius: 0; }
svg { display: block; flex: none; }
.defs { position: absolute; width: 0; height: 0; }
i { font-style: normal; }

.titlebar { height: 34px; flex: none; display: grid; grid-template-columns: 811px auto 1fr; align-items: center; background: #363636; color: #fff; }
.quick { display: flex; align-items: center; gap: 12px; padding-left: 5px; }
.quick .logo { width: 24px; height: 24px; margin-right: 1px; }
.quick button, .quick button svg { width: 18px; height: 18px; }
.titlebar h1 { font-size: 16px; line-height: 24px; padding-bottom: 2px; }
.title-end { justify-self: end; display: flex; align-items: center; gap: 21px; padding-right: 6px; }
.account { display: flex; gap: 11px; font-size: 14px; line-height: 20px; }
.account button { display: flex; gap: 6px; align-items: center; }
.account svg { width: 20px; height: 20px; }
.winbtns { display: flex; gap: 12px; }
.winbtns button, .winbtns svg { width: 18px; height: 18px; }

.app { flex: 1; min-height: 0; margin: 0 2px 2px; display: flex; flex-direction: column; position: relative; }
.i { width: 16px; height: 16px; }
.tr { width: 6px; height: 4px; color: #333; }

.tabs { height: 20px; flex: none; display: flex; padding-left: 1px; border-bottom: 1px solid #000; background: linear-gradient(#3a3a3a, #888 40%, #fff 95%); color: #33506e; }
.tabs button { width: 61px; padding-bottom: 1px; }
.tabs button:nth-child(4) { width: 44px; }
.tabs button:nth-child(5) { width: 43px; }
.tabs .file { width: 54px; background: linear-gradient(#1c50b0, #3a76d0); color: #fff; }
.tabs .on { width: 52px; background: linear-gradient(#fff, #f4f8fd); color: #15325a; font-size: 13px; }
.tabs-end { margin-left: auto; display: flex; align-items: center; gap: 4px; padding-right: 8px; width: 88px; background: linear-gradient(90deg, transparent 60%, #000); }
.tabs-end .chev { width: 10px; height: 8px; margin: 0 8px 0 9px; }

.ribbon { height: 94px; flex: none; display: flex; background: linear-gradient(#f6faff, #e3ecf8 45%, #dce8f5); border-bottom: 1px solid #9db3cc; border-top: 1px solid #c8d8e8; }
.group { display: flex; flex-direction: column; border-right: 1px solid #a8bcd2; box-shadow: 1px 0 0 #fff; padding-top: 3px; }
.group h2 { font-size: 13px; line-height: 20px; height: 20px; text-align: center; color: #2a4470; padding-left: 8px; }
.cols { display: grid; grid-auto-rows: 23px; align-items: center; height: 69px; font-size: 13px; line-height: 20px; }
.cols button { display: flex; align-items: center; gap: 3px; text-align: left; white-space: nowrap; }
.cols .off { color: #8c8c8c; }
.g-select { width: 227px; }
.g-select .cols { grid-template-columns: 90px auto; padding-left: 12px; }
.g-draw { width: 191px; }
.g-draw .cols { grid-template-columns: 24px 36px 24px 36px 24px 36px; padding-left: 10px; }
.g-text { width: 124px; }
.g-text .cols { grid-template-columns: 89px 16px; padding-left: 14px; }
.g-tools { width: 203px; }
.g-tools .cols { grid-template-columns: 24px 24px 36px 36px 24px 24px 24px; padding-left: 10px; }
.g-draw .cols button, .g-tools .cols button { padding-left: 4px; }
.dim .tr { color: #999; }
.g-prop { width: 74px; }
.g-prop .cols { padding-left: 14px; }
.g-snap { width: 170px; }
.snap-row { display: flex; gap: 6px; padding-left: 8px; }
.big { width: 60px; height: 69px; border: 1px solid #b98a3c; border-radius: 3px; background: linear-gradient(#fce0a8, #ffce6c 45%, #ffd47c); font-size: 13px; line-height: 20px; padding: 3px 0 0; display: flex; flex-direction: column; align-items: center; }
.big svg { width: 34px; height: 36px; }
.g-snap .cols { grid-template-columns: repeat(4, 24px); justify-items: center; }
.g-snap .cols button { width: 20px; height: 20px; justify-content: center; border-radius: 2px; }
.g-snap .cols .sel { border: 1px solid #b98a3c; background: linear-gradient(#fbe0a4, #ffd27a); }
.g-edit { width: 59px; }
.g-edit .cols { grid-template-columns: 23px 23px; padding-left: 14px; }

.doctabs { height: 27px; flex: none; display: flex; align-items: flex-end; background: linear-gradient(90deg, #c8daf0, #d8e5f4 50%, #ecf5fd); padding: 0 7px 0 23px; font-size: 11px; }
.doctabs > button { height: 22px; width: 96px; text-align: left; }
.doc-on { height: 22px; width: 107px; display: flex; align-items: center; justify-content: space-between; padding: 0 3px 0 6px; border: 2px solid #a4b6cc; border-bottom: 0; border-radius: 3px 3px 0 0; }
.sq, .doctabs > .sq { width: 18px; height: 18px; border: 1px solid #9ab0c8; border-radius: 3px; background: linear-gradient(#e8f1fa, #c8daf0); display: flex; align-items: center; justify-content: center; }
.sq svg { width: 10px; height: 9px; }
.last, .doctabs > .last { margin-left: auto; margin-bottom: 2px; }

main { flex: 1; min-height: 0; display: flex; gap: 3px; background: #f0f0f0; padding-bottom: 5px; }
aside { width: 250px; flex: none; display: flex; flex-direction: column; padding-top: 2px; background: #f0f0f0; }
.bar { height: 15px; flex: none; display: flex; align-items: center; justify-content: space-between; border: 1px solid #7f8894; background: linear-gradient(#dce9fc, #b4d2fb); color: #1a4b90; font-size: 13px; line-height: 13px; padding: 0 7px 0 5px; margin-left: 1px; }
.bar svg { width: 8px; height: 10px; }
.bar.fav { padding-right: 23px; margin-top: 6px; }
select { appearance: none; background: #e1e1e1 url("data:image/svg+xml,%3Csvg xmlns='http://www.w3.org/2000/svg' width='10' height='6'%3E%3Cpath d='M1 1l4 4 4-4' fill='none' stroke='%23444'/%3E%3C/svg%3E") no-repeat right 4px center; border: 1px solid #adadad; }
.preset { height: 24px; flex: none; margin: 2px 0 0; padding: 0 0 2px 4px; font-size: 13px; }
.props { display: flex; height: 321px; flex: none; background: #fff; padding-left: 2px; }
.props table { width: 229px; border-collapse: collapse; table-layout: fixed; background: #e2ecf8; height: 315px; }
.props th, .props td { height: 21px; padding: 0; font-weight: 400; text-align: left; border-bottom: 1px dashed #808080; white-space: nowrap; line-height: 16px; }
.props th { width: 135px; padding-left: 40px; border-right: 1px solid #808080; }
.props td { padding-left: 2px; }
.props .en { font-size: 11px; }
.props td svg { width: 12px; height: 12px; display: inline-block; vertical-align: -2px; margin: 0 8px 0 2px; }
.props .sect { padding-left: 5px; }
.sect svg { display: inline-block; width: 11px; height: 11px; margin-right: 4px; vertical-align: -1px; }
.red { display: inline-block; width: 11px; height: 11px; background: #f00; border: 1px solid #000; margin: 0 3px; vertical-align: -1px; }
.vs { width: 17px; flex: none; display: flex; flex-direction: column; align-items: center; background: #f0f0f0; padding: 5px 0; }
.vs svg, .hs svg { width: 10px; height: 10px; }
.vs b { width: 15px; height: 17px; background: #cdcdcd; margin-bottom: auto; }
.vs-props b { margin-top: 36px; }
.favs { flex: 1; margin-top: 2px; background: #fff; border: 1px solid #828790; }
.fav-head { display: flex; line-height: 20px; font-size: 13px; padding-left: 7px; }
.fav-head span { width: 117px; border-right: 1px solid #e4e4e4; }
.fav-head span + span { border: 0; padding-left: 5px; }

.work { flex: 1; min-width: 0; display: flex; flex-direction: column; position: relative; }
.stage { flex: 1; min-height: 0; display: flex; }
.canvas { flex: 1; min-width: 0; position: relative; background: #c0c0c0; overflow: hidden; }
.drawing { width: 100%; height: 100%; }
.cad text { fill: #fff; font: 9px "Liberation Mono", monospace; }
.cad .b { font: bold 8px "Liberation Serif", serif; }
.cad .t { font: bold 5px "Liberation Serif", serif; }
.vs-main b { margin-top: 283px; }
.mdi { position: absolute; right: 6px; top: 2px; display: flex; gap: 4px; }
.mdi svg { width: 12px; height: 12px; }
.convert { position: absolute; right: 10px; top: 17px; width: 138px; height: 48px; border: 3px solid #fff; border-radius: 24px; background: #4f82d2; color: #fff; font-size: 13px; display: flex; align-items: center; gap: 16px; padding: 0 0 2px 12px; }
.convert svg { width: 20px; height: 20px; }
.sogou { position: absolute; right: 1px; bottom: 153px; height: 25px; width: 137px; background: #fff; border: 1px solid #b8cce4; display: flex; align-items: center; gap: 8px; }
.sogou svg { width: 16px; height: 16px; }
.sogou .s { width: 32px; height: 32px; margin-left: -17px; margin-right: -3px; }

.layouts { height: 21px; flex: none; display: flex; align-items: flex-start; background: linear-gradient(90deg, #c8daf0, #e8f1fb); padding-right: 17px; font-size: 11px; }
.layouts > button:first-child { width: 62px; padding-left: 2px; }
.lay { position: relative; width: 116px; height: 18px; }
.lay svg { position: absolute; inset: 0; width: 116px; height: 20px; }
.layouts .last { margin: 2px 0 0 auto; }
.grip { width: 2px; height: 18px; border-left: 2px dotted #8a94a4; margin: 2px 2px 0 4px; }
.hs { width: 567px; height: 17px; background: #f0f0f0; display: flex; align-items: center; padding: 0 4px; }
.hs b { width: 17px; height: 15px; background: #cdcdcd; margin: 0 auto 0 176px; }
.meter { position: absolute; right: -2px; bottom: 3px; width: 10px; height: 58px; }

.dialog { position: absolute; left: 403px; top: 43px; width: 604px; height: 425px; background: #f0f0f0; }
.dialog > header { height: 25px; background: #fff; display: flex; align-items: center; justify-content: space-between; padding: 0 9px 1px 3px; }
.dialog > header svg { width: 12px; height: 12px; }
.dialog form { padding: 10px 12px 0 15px; }
fieldset { margin: 0; padding: 0; border: 1px solid #dcdcdc; min-width: 0; }
legend { padding: 0 2px; margin-left: -7px; height: 16px; }
.range legend { margin-left: -2px; }
.printer { display: grid; grid-template-columns: 63px 326px 1fr; grid-template-rows: 37px; grid-auto-rows: 25px; align-items: center; height: 176px; padding: 11px 0 0 12px; }
.printer .top { align-self: start; }
.printer label.top { line-height: 28px; }
.printer > select { height: 26px; padding-left: 3px; }
.printer .btn { width: 104px; margin-left: 50px; }
.tick { display: flex; align-items: center; gap: 3px; white-space: nowrap; }
.printer .tick { padding-left: 49px; align-self: end; }
input[type=checkbox] { appearance: none; width: 13px; height: 13px; border: 1px solid #333; background: #fff; flex: none; }
input[type=checkbox]:disabled { border-color: #ccc; }
input[type=radio] { appearance: none; width: 13px; height: 13px; border: 1px solid #333; border-radius: 50%; background: #fff; flex: none; }
input[type=radio]:checked { background: radial-gradient(circle, #222 3px, #fff 4px); }
.pair { display: grid; grid-template-columns: 313fr 254fr; gap: 9px; margin-top: 10px; padding-left: 1px; }
.range { height: 135px; padding: 8px 0 0 8px; }
.copies { height: 135px; padding: 8px 0 0 13px; }
.line { height: 34px; display: flex; align-items: center; white-space: nowrap; }
.range label { display: flex; align-items: center; gap: 3px; }
.range .wide { width: 116px; }
.range .from { width: 34px; }
.range .to { width: 35px; margin-left: 19px; }
.range input[type=text] { width: 46px; height: 26px; border: 1px solid #7a7a7a; background: #fff; padding: 0 0 2px 4px; }
.copies .line > label[for] { width: 154px; }
.spin { width: 48px; height: 26px; display: flex; border: 1px solid #7a7a7a; background: #fff; }
.spin input { width: 30px; padding: 0 0 2px 4px; }
.spin div { width: 16px; display: flex; flex-direction: column; }
.spin button { flex: 1; border: 1px solid #adadad; background: #f0f0f0; display: flex; align-items: center; justify-content: center; }
.spin button svg { width: 6px; height: 4px; }
.collate { margin-top: 16px; padding-left: 19px; gap: 4px; color: #838383; }
.collate svg { width: 30px; height: 30px; }
.collate text { font: 14px "Noto Sans", sans-serif; fill: #000; }
.collate .tick { margin-left: 14px; }
.btn { height: 28px; width: 82px; background: #e1e1e1; border: 1px solid #adadad; }
.btn.ok { border: 2px solid #0078d7; }
.dialog footer { display: flex; justify-content: flex-end; gap: 13px; margin-top: 19px; padding-right: 1px; }
.mark { position: absolute; border: 3px solid #f00; box-shadow: 2px 2px 4px #0007, inset 2px 2px 4px #0006; pointer-events: none; }
.m1 { left: 473px; top: 228px; width: 99px; height: 71px; }
.m2 { left: 398px; top: 352px; width: 105px; height: 65px; }

.command { flex: none; background: #f0f0f0; }
.log { height: 60px; margin-top: 1px; background: #fff; border: 1px solid #7a7a7a; border-bottom-width: 2px; display: flex; font-size: 13px; line-height: 15px; padding: 1px 0 0 2px; }
.log p { font-size: 13px; }
.vs-log { height: 56px; padding: 4px 0; }
.vs-log b { margin-top: 8px; }
.activate { margin-left: auto; width: 270px; color: #b4b4b4; display: flex; flex-direction: column; }
.activate strong { font-weight: 400; font-size: 20px; line-height: 28px; padding-top: 3px; }
.activate span { font-size: 15px; line-height: 20px; }
.prompt { height: 22px; display: flex; background: #fff; border-bottom: 1px solid #7a7a7a; font-size: 13px; }
.prompt label { width: 59px; background: #b4d3fb; border-right: 1px solid #7a7a7a; padding-left: 8px; line-height: 18px; }
.prompt input { flex: 1; }
.status { height: 20px; flex: none; display: flex; align-items: center; background: linear-gradient(#eaf2fb, #c8daf0); border-top: 1px solid #a8b8cc; color: #2a4a80; padding: 0 0 2px 7px; border-bottom: 1px solid #7a8aa0; font-size: 11px; }
.file-name { flex: 1; }
.count { width: 95px; }
.modes { display: flex; gap: 5px; width: 85px; }
.modes svg { width: 16px; height: 16px; }
.pos { width: 245px; }
.sep { width: 208px; height: 17px; border-left: 1px solid #b0c4dc; }
.ifly { position: absolute; right: 0; bottom: -2px; width: 169px; height: 29px; background: #fff; border: 1px solid #ccc; display: flex; align-items: center; gap: 6px; padding-left: 4px; }
.ifly svg { width: 22px; height: 22px; }
.fly { font: bold 8px "Noto Sans", sans-serif; fill: #3a62f0; }
.site { position: absolute; right: 2px; bottom: 5px; display: flex; opacity: .85; }
.site > svg { width: 44px; height: 44px; }
.site div { width: 112px; display: flex; flex-direction: column; white-space: nowrap; }
.site strong { font-size: 21px; line-height: 24px; color: #4d96d6; }
.site span { font-size: 16px; line-height: 20px; font-weight: 600; color: #4cb878; }
```
